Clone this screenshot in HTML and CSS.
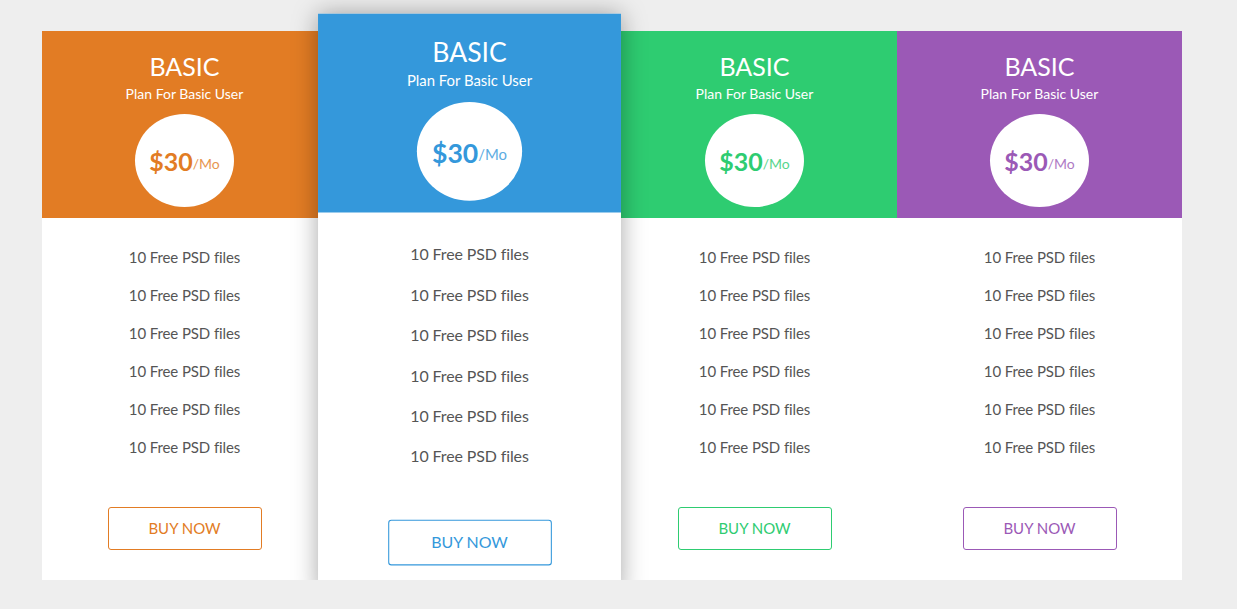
FILE: index.html
```html
<!DOCTYPE html>
<html>
<head>
<meta charset="utf-8">
<link rel="stylesheet" href="styles.css">
</head>
<body>
<div class="pricing">
  <div class="card orange">
    <div class="head">
      <div class="title">BASIC</div>
      <div class="sub">Plan For Basic User</div>
      <div class="circle"><span class="amt">$30</span><span class="per">/Mo</span></div>
    </div>
    <ul class="list">
      <li>10 Free PSD files</li><li>10 Free PSD files</li><li>10 Free PSD files</li>
      <li>10 Free PSD files</li><li>10 Free PSD files</li><li>10 Free PSD files</li>
    </ul>
    <div class="foot"><a class="btn">BUY NOW</a></div>
  </div>
  <div class="card blue featured">
    <div class="head">
      <div class="title">BASIC</div>
      <div class="sub">Plan For Basic User</div>
      <div class="circle"><span class="amt">$30</span><span class="per">/Mo</span></div>
    </div>
    <ul class="list">
      <li>10 Free PSD files</li><li>10 Free PSD files</li><li>10 Free PSD files</li>
      <li>10 Free PSD files</li><li>10 Free PSD files</li><li>10 Free PSD files</li>
    </ul>
    <div class="foot"><a class="btn">BUY NOW</a></div>
  </div>
  <div class="card green">
    <div class="head">
      <div class="title">BASIC</div>
      <div class="sub">Plan For Basic User</div>
      <div class="circle"><span class="amt">$30</span><span class="per">/Mo</span></div>
    </div>
    <ul class="list">
      <li>10 Free PSD files</li><li>10 Free PSD files</li><li>10 Free PSD files</li>
      <li>10 Free PSD files</li><li>10 Free PSD files</li><li>10 Free PSD files</li>
    </ul>
    <div class="foot"><a class="btn">BUY NOW</a></div>
  </div>
  <div class="card purple">
    <div class="head">
      <div class="title">BASIC</div>
      <div class="sub">Plan For Basic User</div>
      <div class="circle"><span class="amt">$30</span><span class="per">/Mo</span></div>
    </div>
    <ul class="list">
      <li>10 Free PSD files</li><li>10 Free PSD files</li><li>10 Free PSD files</li>
      <li>10 Free PSD files</li><li>10 Free PSD files</li><li>10 Free PSD files</li>
    </ul>
    <div class="foot"><a class="btn">BUY NOW</a></div>
  </div>
</div>
</body>
</html>
```
FILE: styles.css
```css
html, body {
  margin: 0;
  padding: 0;
  background: #eeeeee;
  font-family: Lato, "Open Sans", sans-serif;
}
.pricing {
  display: flex;
  width: 1140px;
  margin: 31px 0 0 42px;
}
.card {
  width: 285px;
  height: 549px;
  background: #fff;
  display: flex;
  flex-direction: column;
  --c: #e67e22;
}
.orange { --c: #e27c24; }
.blue { --c: #3498db; }
.green { --c: #2ecc71; }
.purple { --c: #9b59b6; }
.featured {
  position: relative;
  z-index: 2;
  transform: scale(1.063);
  box-shadow: 0 0 22px rgba(0, 0, 0, 0.35);
}
.head {
  height: 187px;
  background: var(--c);
  color: #fff;
  display: flex;
  flex-direction: column;
  align-items: center;
  box-sizing: border-box;
  padding-top: 20px;
}
.title {
  font-size: 25px;
  line-height: 30px;
}
.sub {
  font-size: 14px;
  line-height: 20px;
  margin-top: 3px;
}
.circle {
  margin-top: 10px;
  width: 99px;
  height: 93px;
  border-radius: 50%;
  background: #fff;
  display: flex;
  align-items: center;
  justify-content: center;
  color: var(--c);
  box-sizing: border-box;
}
.amt {
  font-size: 25px;
  font-weight: 700;
}
.per {
  font-size: 14px;
  opacity: 0.8;
  margin-top: 6px;
}
.list {
  list-style: none;
  margin: 0;
  padding: 20px 0 0;
  text-align: center;
}
.list li {
  font-size: 15px;
  line-height: 38px;
  color: #555;
  letter-spacing: -0.1px;
}
.foot {
  margin-top: auto;
  padding-bottom: 30px;
  display: flex;
  justify-content: center;
}
.btn {
  width: 154px;
  height: 43px;
  box-sizing: border-box;
  border: 1px solid var(--c);
  border-radius: 3px;
  color: var(--c);
  font-size: 15px;
  display: flex;
  align-items: center;
  justify-content: center;
  padding-bottom: 2px;
}
```
